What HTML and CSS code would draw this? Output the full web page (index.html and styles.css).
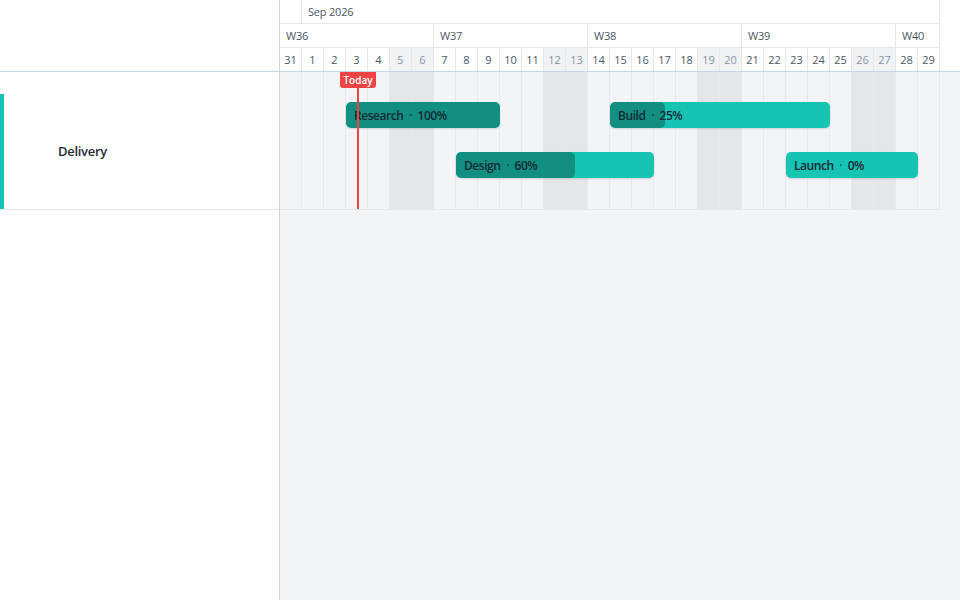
FILE: index.html
```html
<!DOCTYPE html>
<html lang="en">
<head>
    <meta charset="UTF-8">
    <meta name="viewport" content="width=device-width, initial-scale=1.0">
    <title>Delivery timeline</title>
    <link rel="stylesheet" href="styles.css">
</head>
<body>
<div class="gantt">
    <aside class="sidebar">
        <div class="sidebar-head"></div>
        <div class="group">
            <div class="group-label">Delivery</div>
        </div>
    </aside>

    <main class="chart">
        <div class="scale-wrap">
            <div class="scale">
                <!-- months -->
                <div class="cell head span-1"></div>
                <div class="cell head span-29">Sep 2026</div>
                <!-- iso weeks -->
                <div class="cell head span-7">W36</div>
                <div class="cell head span-7">W37</div>
                <div class="cell head span-7">W38</div>
                <div class="cell head span-7">W39</div>
                <div class="cell head span-2">W40</div>
                <!-- days -->
                <div class="cell day">31</div>
                <div class="cell day">1</div>
                <div class="cell day">2</div>
                <div class="cell day">3</div>
                <div class="cell day">4</div>
                <div class="cell day weekend">5</div>
                <div class="cell day weekend">6</div>
                <div class="cell day">7</div>
                <div class="cell day">8</div>
                <div class="cell day">9</div>
                <div class="cell day">10</div>
                <div class="cell day">11</div>
                <div class="cell day weekend">12</div>
                <div class="cell day weekend">13</div>
                <div class="cell day">14</div>
                <div class="cell day">15</div>
                <div class="cell day">16</div>
                <div class="cell day">17</div>
                <div class="cell day">18</div>
                <div class="cell day weekend">19</div>
                <div class="cell day weekend">20</div>
                <div class="cell day">21</div>
                <div class="cell day">22</div>
                <div class="cell day">23</div>
                <div class="cell day">24</div>
                <div class="cell day">25</div>
                <div class="cell day weekend">26</div>
                <div class="cell day weekend">27</div>
                <div class="cell day">28</div>
                <div class="cell day">29</div>
            </div>
        </div>

        <div class="lanes">
            <div class="cols">
                <div class="col"></div><div class="col"></div><div class="col"></div>
                <div class="col"></div><div class="col"></div>
                <div class="col weekend"></div><div class="col weekend"></div>
                <div class="col"></div><div class="col"></div><div class="col"></div>
                <div class="col"></div><div class="col"></div>
                <div class="col weekend"></div><div class="col weekend"></div>
                <div class="col"></div><div class="col"></div><div class="col"></div>
                <div class="col"></div><div class="col"></div>
                <div class="col weekend"></div><div class="col weekend"></div>
                <div class="col"></div><div class="col"></div><div class="col"></div>
                <div class="col"></div><div class="col"></div>
                <div class="col weekend"></div><div class="col weekend"></div>
                <div class="col"></div><div class="col"></div>
            </div>

            <div class="bars">
                <div class="bar lane-1" style="grid-column: 4 / 11">
                    <div class="bar-fill" style="width: 100%"></div>
                    <span class="bar-label">Research <i>·</i> 100%</span>
                </div>
                <div class="bar lane-1" style="grid-column: 16 / 26">
                    <div class="bar-fill" style="width: 25%"></div>
                    <span class="bar-label">Build <i>·</i> 25%</span>
                </div>
                <div class="bar lane-2" style="grid-column: 9 / 18">
                    <div class="bar-fill" style="width: 60%"></div>
                    <span class="bar-label">Design <i>·</i> 60%</span>
                </div>
                <div class="bar lane-2" style="grid-column: 24 / 30">
                    <div class="bar-fill" style="width: 0%"></div>
                    <span class="bar-label">Launch <i>·</i> 0%</span>
                </div>

                <div class="today" style="grid-column: 4">
                    <span class="today-tag">Today</span>
                    <span class="today-line"></span>
                </div>
            </div>
        </div>
    </main>
</div>
</body>
</html>
```

FILE: styles.css
```css
body {
    margin: 0;
    font-family: 'Open Sans', 'Noto Sans', sans-serif;
    color: #1f2937;
}

.gantt {
    display: grid;
    grid-template-columns: 280px 1fr;
    height: 100vh;
    overflow: hidden;
}

/* left column with task groups */
.sidebar {
    background-color: #fff;
    border-right: 1px solid #d1d5db;
}

.sidebar-head {
    height: 71px;
    border-bottom: 1px solid #cbd5e1;
}

.group {
    height: 137px;
    border-bottom: 1px solid #e5e7eb;
    display: flex;
    align-items: flex-end;
}

.group-label {
    height: 114px;
    flex: 1;
    border-left: 4px solid #17c3b2;
    padding-left: 54px;
    padding-bottom: 1px;
    display: flex;
    align-items: center;
    font-size: 13px;
    font-weight: 600;
    letter-spacing: -0.3px;
    color: #1f2937;
}

/* timeline */
.chart {
    background-color: #f3f4f6;
}

.scale-wrap {
    background-color: #fff;
    border-bottom: 1px solid #cbd5e1;
}

.scale {
    display: grid;
    grid-template-columns: repeat(30, 22px);
    grid-template-rows: 24px 24px 23px;
    width: 660px;
}

.cell {
    box-sizing: border-box;
    border-right: 1px solid #e5e7eb;
    font-size: 11px;
    color: #4b5563;
}

.head {
    border-bottom: 1px solid #e5e7eb;
    padding-left: 6px;
    line-height: 23px;
    letter-spacing: -0.2px;
}

.span-1 { grid-column: span 1; }
.span-2 { grid-column: span 2; }
.span-7 { grid-column: span 7; }
.span-29 { grid-column: span 29; }

.day {
    text-align: center;
    line-height: 23px;
}

.day.weekend {
    background-color: #f1f2f4;
    color: #8792a6;
}

.lanes {
    display: grid;
    width: 660px;
    border-bottom: 1px solid #e5e7eb;
}

.cols,
.bars {
    grid-area: 1 / 1;
}

.cols {
    display: flex;
}

.col {
    width: 22px;
    box-sizing: border-box;
    border-right: 1px solid #e7e9ec;
}

.col.weekend {
    background-color: #e5e6e8;
}

.bars {
    display: grid;
    grid-template-columns: repeat(30, 22px);
    grid-template-rows: 30px 26px 24px 26px 31px;
}

.bar {
    position: relative;
    height: 26px;
    border-radius: 5px;
    background-color: #17c3b2;
    box-shadow: 0 1px 2px rgba(15, 23, 42, 0.15);
    overflow: hidden;
    display: flex;
    align-items: center;
}

.lane-1 { grid-row: 2; }
.lane-2 { grid-row: 4; }

.bar-fill {
    position: absolute;
    top: 0;
    left: 0;
    bottom: 0;
    border-radius: 5px;
    background-color: #128f81;
}

.bar-label {
    position: relative;
    padding-left: 8px;
    font-size: 12px;
    font-weight: 600;
    letter-spacing: -0.45px;
    color: #132a35;
    white-space: nowrap;
}

.bar-label i {
    font-style: normal;
    font-weight: 400;
    margin: 0 3px;
}

/* current day marker */
.today {
    grid-row: 1 / -1;
    position: relative;
    z-index: 2;
    display: flex;
    flex-direction: column;
    align-items: center;
    padding-left: 2px;
}

.today-tag {
    width: 36px;
    height: 16px;
    flex-shrink: 0;
    border-radius: 0 0 3px 3px;
    background-color: #ef4444;
    color: #fff;
    font-size: 10px;
    font-weight: 600;
    line-height: 16px;
    text-align: center;
}

.today-line {
    flex: 1;
    width: 2px;
    background-color: #ef4444;
}
```
